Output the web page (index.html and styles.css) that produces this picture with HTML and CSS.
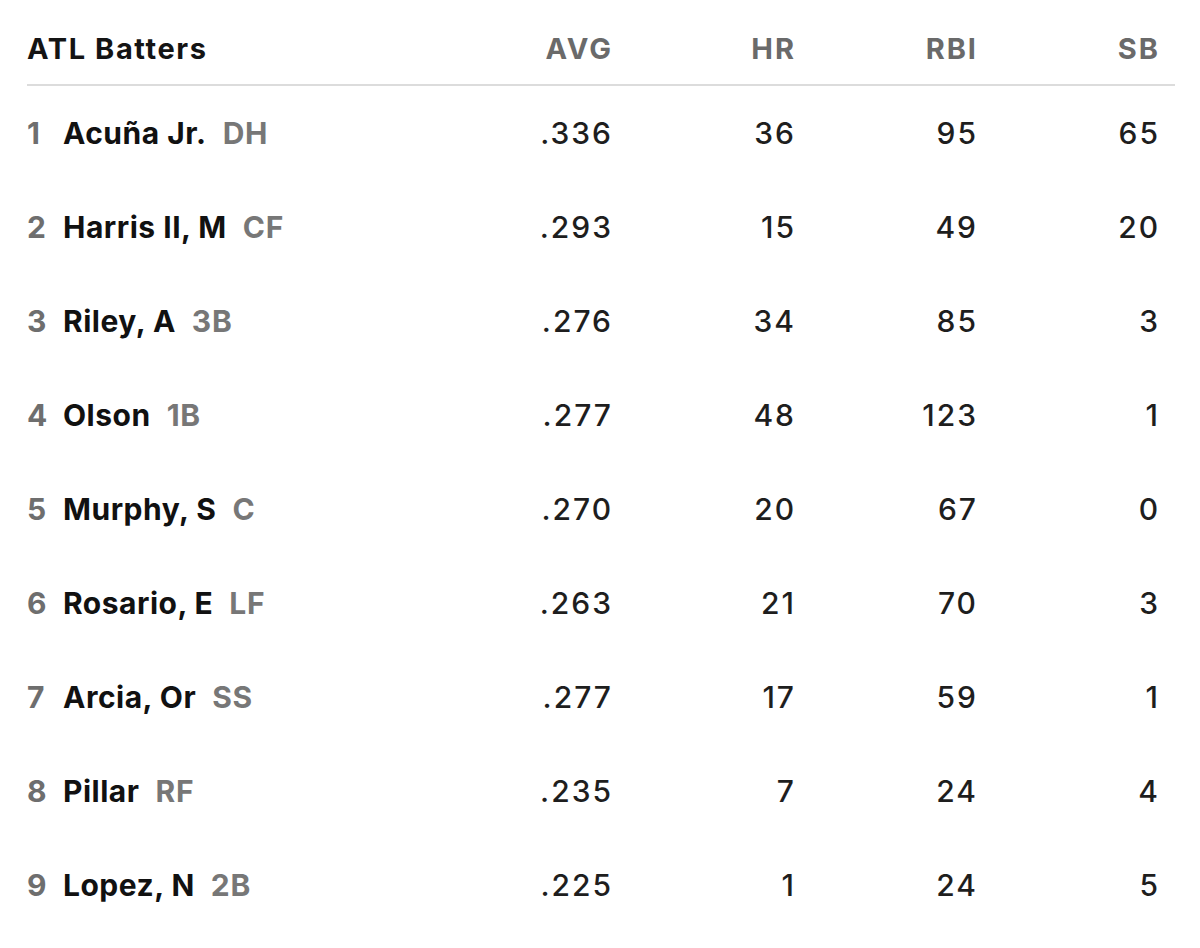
FILE: index.html
```html
<!DOCTYPE html>
<html>
<head>
<meta charset="utf-8">
<link rel="stylesheet" href="styles.css">
</head>
<body>
<div class="table">
  <div class="row head">
    <div class="title">ATL Batters</div>
    <div class="stat">AVG</div>
    <div class="stat">HR</div>
    <div class="stat">RBI</div>
    <div class="stat">SB</div>
  </div>
  <div class="row"><div class="player"><span class="num">1</span><span class="name">Acuña Jr.</span><span class="pos">DH</span></div><div class="val">.336</div><div class="val">36</div><div class="val">95</div><div class="val">65</div></div>
  <div class="row"><div class="player"><span class="num">2</span><span class="name">Harris II, M</span><span class="pos">CF</span></div><div class="val">.293</div><div class="val">15</div><div class="val">49</div><div class="val">20</div></div>
  <div class="row"><div class="player"><span class="num">3</span><span class="name">Riley, A</span><span class="pos">3B</span></div><div class="val">.276</div><div class="val">34</div><div class="val">85</div><div class="val">3</div></div>
  <div class="row"><div class="player"><span class="num">4</span><span class="name">Olson</span><span class="pos">1B</span></div><div class="val">.277</div><div class="val">48</div><div class="val">123</div><div class="val">1</div></div>
  <div class="row"><div class="player"><span class="num">5</span><span class="name">Murphy, S</span><span class="pos">C</span></div><div class="val">.270</div><div class="val">20</div><div class="val">67</div><div class="val">0</div></div>
  <div class="row"><div class="player"><span class="num">6</span><span class="name">Rosario, E</span><span class="pos">LF</span></div><div class="val">.263</div><div class="val">21</div><div class="val">70</div><div class="val">3</div></div>
  <div class="row"><div class="player"><span class="num">7</span><span class="name">Arcia, Or</span><span class="pos">SS</span></div><div class="val">.277</div><div class="val">17</div><div class="val">59</div><div class="val">1</div></div>
  <div class="row"><div class="player"><span class="num">8</span><span class="name">Pillar</span><span class="pos">RF</span></div><div class="val">.235</div><div class="val">7</div><div class="val">24</div><div class="val">4</div></div>
  <div class="row"><div class="player"><span class="num">9</span><span class="name">Lopez, N</span><span class="pos">2B</span></div><div class="val">.225</div><div class="val">1</div><div class="val">24</div><div class="val">5</div></div>
</div>
</body>
</html>
```

FILE: styles.css
```css
html, body {
  margin: 0;
  padding: 0;
  background: #fff;
}
body {
  font-family: Inter, "Open Sans", Arial, sans-serif;
  color: #1a1a1a;
}
.table {
  margin-left: 27px;
  width: 1148px;
}
.row {
  display: grid;
  grid-template-columns: 401px 183px 183px 182px 182px;
  padding-right: 17px;
  height: 94px;
  align-items: center;
  font-size: 30px;
  line-height: 36px;
  padding-top: 0;
  box-sizing: border-box;
}
.row.head {
  height: 86px;
  align-items: end;
  padding-bottom: 17px;
  border-bottom: 2px solid #dcdcdc;
  font-weight: 700;
}
.title {
  color: #141414;
  font-size: 29px;
  letter-spacing: 1.6px;
}
.stat {
  text-align: right;
  color: #6a6a6a;
  font-size: 29px;
  letter-spacing: 2px;
  margin-right: -2px;
}
.player {
  display: flex;
  align-items: baseline;
  white-space: nowrap;
}
.num {
  width: 36px;
  color: #6e6e6e;
  font-weight: 700;
}
.name {
  font-weight: 700;
  color: #111;
  letter-spacing: 0.5px;
}
.pos {
  margin-left: 16px;
  font-weight: 700;
  color: #777;
  letter-spacing: 0.8px;
}
.val {
  text-align: right;
  color: #1e1e1e;
  font-weight: 500;
  letter-spacing: 2px;
  margin-right: -2px;
}
```
